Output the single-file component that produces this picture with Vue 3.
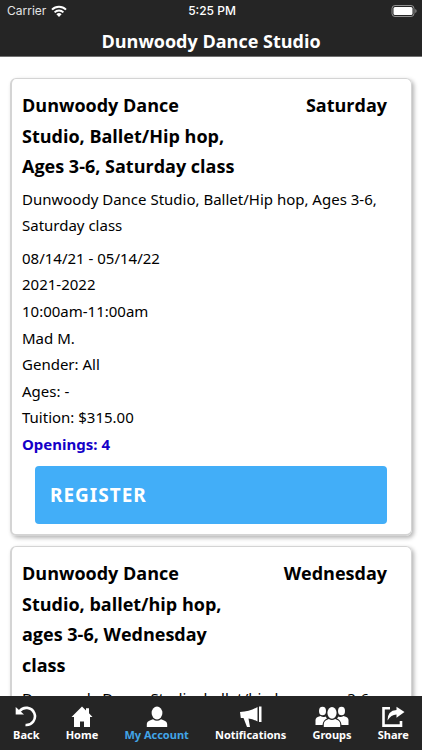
<script setup>
const classes = [
  {
    title: 'Dunwoody Dance Studio, Ballet/Hip hop, Ages 3-6, Saturday class',
    day: 'Saturday',
    description: 'Dunwoody Dance Studio, Ballet/Hip hop, Ages 3-6, Saturday class',
    details: ['08/14/21 - 05/14/22', '2021-2022', '10:00am-11:00am', 'Mad M.', 'Gender: All', 'Ages: -', 'Tuition: $315.00'],
    openings: 4,
  },
  {
    title: 'Dunwoody Dance Studio, ballet/hip hop, ages 3-6, Wednesday class',
    day: 'Wednesday',
    description: 'Dunwoody Dance Studio, ballet/hip hop, ages 3-6,',
    details: [],
    openings: null,
  },
]
const tabs = ['Back', 'Home', 'My Account', 'Notifications', 'Groups', 'Share']
</script>

<template>
  <div class="screen">
    <header class="top">
      <div class="status">
        <span class="carrier">Carrier
          <svg width="16" height="12" viewBox="0 0 16 12" fill="none" stroke="#fff" stroke-width="2" aria-hidden="true">
            <path d="M1 4.600a10 10 0 0 1 14 0M3.600 7.400a6.200 6.200 0 0 1 8.800 0" />
            <path d="M8 12 5.400 9.300a3.700 3.700 0 0 1 5.200 0z" fill="#fff" stroke="none" />
          </svg>
        </span>
        <span class="clock">5:25 PM</span>
        <span class="battery">
          <svg width="26" height="12" viewBox="0 0 26 12" aria-hidden="true">
            <rect x="1" y=".5" width="22" height="11" rx="3" fill="none" stroke="#919191" />
            <rect x="2.500" y="2" width="19" height="8" rx="1.500" fill="#fff" />
            <path d="M24.300 4a2.200 2.200 0 0 1 0 4z" fill="#919191" />
          </svg>
        </span>
      </div>
      <h1>Dunwoody Dance Studio</h1>
    </header>

    <main class="list">
      <article v-for="c in classes" :key="c.day" class="card">
        <div class="head">
          <h2>{{ c.title }}</h2>
          <span class="day">{{ c.day }}</span>
        </div>
        <p class="description">{{ c.description }}</p>
        <ul v-if="c.details.length" class="details">
          <li v-for="d in c.details" :key="d">{{ d }}</li>
          <li class="openings">Openings: {{ c.openings }}</li>
        </ul>
        <button v-if="c.openings" type="button" class="register">REGISTER</button>
      </article>
    </main>

    <nav class="tabs">
      <a v-for="t in tabs" :key="t" href="#" :class="{ active: t === 'My Account' }">
        <svg v-if="t === 'Back'" width="22" height="22" viewBox="0 0 22 22" aria-hidden="true">
          <path d="M4.500 5.200A8.600 8.600 0 1 1 10.500 19" fill="none" stroke="#fff" stroke-width="2.600" />
          <path d="M.7 1v7.500H9z" fill="#fff" />
        </svg>
        <svg v-else-if="t === 'Home'" width="22" height="22" viewBox="0 0 22 22" fill="#fff" aria-hidden="true">
          <path d="M11 .5 15 4.400V2.200h3v5l3.500 3.800H19v10h-6v-5.500H9V21H3V11H.5z" />
        </svg>
        <svg v-else-if="t === 'My Account'" width="22" height="22" viewBox="0 0 22 22" fill="#fff" aria-hidden="true">
          <ellipse cx="11" cy="7" rx="5.400" ry="6.500" />
          <path d="M.8 21v-2.500c0-3 2.500-4 6.200-5.200q4 3 8 0c3.700 1.200 6.200 2.200 6.200 5.200V21z" />
        </svg>
        <svg v-else-if="t === 'Notifications'" width="22" height="22" viewBox="0 0 22 22" fill="#fff" aria-hidden="true">
          <path d="M0 6Q10 5.500 17.500 1v14.500Q13 13 8.500 12.500l1.500 8.500H7L3.500 12H.8zM19 .5h2.500v15.500H19z" />
        </svg>
        <svg v-else-if="t === 'Groups'" width="34" height="22" viewBox="0 0 34 22" fill="#fff" aria-hidden="true">
          <ellipse cx="7.500" cy="5" rx="3.500" ry="4.300" />
          <ellipse cx="26.500" cy="5" rx="3.500" ry="4.300" />
          <path d="M.5 19V14q0-3 5-4 2.500 1.800 5 .5l1.500 2q-4 1.500-4.500 6.500zM33.500 19V14q0-3-5-4-2.500 1.800-5 .5l-1.500 2q4 1.500 4.500 6.500z" />
          <ellipse cx="17" cy="6.800" rx="4.600" ry="5.900" />
          <path d="M8.800 21v-3q0-3.500 5-5 3.200 2 6.400 0 5 1.500 5 5v3z" />
        </svg>
        <svg v-else width="24" height="22" viewBox="0 0 24 22" aria-hidden="true">
          <path d="M9 2.300H2.500v17.300h17.500V15" fill="none" stroke="#fff" stroke-width="2.600" />
          <path d="M15.500.800 23.500 6l-8 5.800V8.500Q10 8.500 6.500 14.500 6.500 4.500 15.500 4z" fill="#fff" />
        </svg>
        <span>{{ t }}</span>
      </a>
    </nav>
  </div>
</template>

<style>
body {
  margin: 0;
  background: #fff;
}
</style>

<style scoped>
.screen {
  height: 100vh;
  display: flex;
  flex-direction: column;
  font-family: "Noto Sans", "Open Sans", sans-serif;
  color: #000;
}
.top {
  background: #252525;
  border-bottom: 1px solid #707070;
  color: #fff;
}
.status {
  display: grid;
  grid-template-columns: 1fr auto 1fr;
  align-items: center;
  height: 22px;
  padding: 0 5px 0 7px;
  font: 12px/22px Inter, sans-serif;
}
.carrier {
  display: flex;
  align-items: center;
  gap: 5px;
  color: #e4e4e4;
}
.clock {
  font-weight: 500;
}
.battery {
  display: flex;
  justify-content: flex-end;
}
h1 {
  margin: 0;
  padding-top: 4px;
  font-family: "Open Sans", "Noto Sans", sans-serif;
  font-size: 18px;
  line-height: 30px;
  text-align: center;
}
.list {
  flex: 1;
  min-height: 0;
  overflow-y: auto;
  scrollbar-width: none;
  display: flex;
  flex-direction: column;
  gap: 10px;
  padding: 21px 10px 0;
}
.card {
  flex: none;
  padding: 11px 24px 10px 10px;
  border: 2px solid #d4d4d4;
  border-top-width: 1px;
  border-right-width: 1px;
  border-radius: 6px;
  box-shadow: 2px 2px 4px #b4b4b4;
}
.head {
  display: flex;
  justify-content: space-between;
  align-items: flex-start;
  font-family: "Open Sans", "Noto Sans", sans-serif;
  font-size: 18px;
  line-height: 1.7;
  font-weight: 700;
}
h2 {
  width: 60%;
  margin: 0;
  font-size: inherit;
}
.description {
  margin: 4px 0 6px;
  font-size: 15px;
  line-height: 1.77;
}
.details {
  margin: 0;
  padding: 0;
  list-style: none;
  font-size: 15px;
  line-height: 1.77;
}
.openings {
  color: #1400c8;
  font-weight: 700;
}
.register {
  display: block;
  width: calc(100% - 13px);
  margin: 9px 0 0 13px;
  padding: 15px;
  border: 0;
  border-radius: 4px;
  background: #42aef8;
  color: #fff;
  font: 700 19px/28px "Noto Sans", "Open Sans", sans-serif;
  letter-spacing: 1px;
  text-align: left;
}
.tabs {
  display: flex;
  justify-content: space-around;
  height: 54px;
  background: #252525;
}
.tabs a {
  display: flex;
  flex-direction: column;
  align-items: center;
  padding-top: 10px;
  color: #fff;
  font-size: 11px;
  line-height: 14px;
  font-weight: 700;
  text-decoration: none;
}
.tabs .active {
  color: #42a5e8;
}
</style>
